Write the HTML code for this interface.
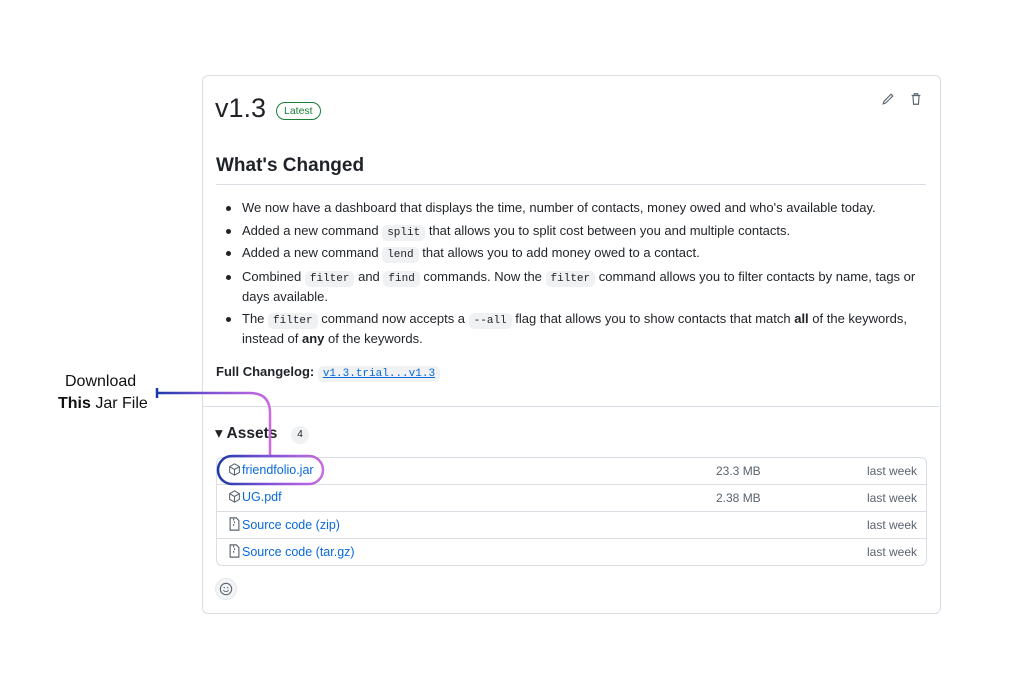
<!DOCTYPE html>
<html><head><meta charset="utf-8"><style>
body{margin:0;width:1009px;height:690px;background:#fff;font-family:"Liberation Sans","DejaVu Sans",sans-serif;color:#1f2328;position:relative;overflow:hidden}
.a{position:absolute;white-space:nowrap}
.card{position:absolute;left:202px;top:75px;width:737px;height:537px;border:1px solid #d8dee4;border-radius:6px}
.t{font-size:13px;color:#1f2328}
code{font-family:"Liberation Mono",monospace;font-size:11px;background:#eff1f3;border-radius:5px;padding:2px 5px}
.bul{position:absolute;left:226px;width:5px;height:5px;border-radius:50%;background:#1f2328}
.lnk{color:#0969da;font-size:12.5px}
.gr{color:#59636e;font-size:12px}
</style></head><body>
<div class="card"></div>
<div class="a" style="left:215px;top:93px;font-size:27px;">v1.3</div>
<div class="a" style="left:276px;top:102px;border:1px solid #1a7f37;color:#1a7f37;border-radius:10px;font-size:10.5px;padding:2px 7px;">Latest</div>
<svg class="a" style="left:881px;top:92px" width="14" height="14" viewBox="0 0 16 16"><path d="M11.5 2.5l2 2-8 8-3 1 1-3z" fill="none" stroke="#59636e" stroke-width="1.3"/></svg>
<svg class="a" style="left:909px;top:92px" width="14" height="14" viewBox="0 0 16 16"><path d="M3 4h10M6 4V2h4v2M4.5 4l.7 10h5.6l.7-10" fill="none" stroke="#59636e" stroke-width="1.3"/></svg>
<div class="a" style="left:216px;top:155px;font-size:19px;font-weight:bold;">What's Changed</div>
<div class="a" style="left:216px;top:184px;width:710px;height:1px;background:#d8dee4"></div>

<div class="bul" style="top:206px"></div><div class="a t" style="left:242px;top:200px">We now have a dashboard that displays the time, number of contacts, money owed and who's available today.</div>
<div class="bul" style="top:229px"></div><div class="a t" style="left:242px;top:223px">Added a new command <code>split</code> that allows you to split cost between you and multiple contacts.</div>
<div class="bul" style="top:251px"></div><div class="a t" style="left:242px;top:245px">Added a new command <code>lend</code> that allows you to add money owed to a contact.</div>
<div class="bul" style="top:275px"></div><div class="a t" style="left:242px;top:269px">Combined <code>filter</code> and <code>find</code> commands. Now the <code>filter</code> command allows you to filter contacts by name, tags or</div>
<div class="a t" style="left:242px;top:289px">days available.</div>
<div class="bul" style="top:317px"></div><div class="a t" style="left:242px;top:311px">The <code>filter</code> command now accepts a <code>--all</code> flag that allows you to show contacts that match <b>all</b> of the keywords,</div>
<div class="a t" style="left:242px;top:331px">instead of <b>any</b> of the keywords.</div>
<div class="a t" style="left:216px;top:364px;font-weight:bold">Full Changelog: <code style="color:#0969da;font-weight:normal;text-decoration:underline">v1.3.trial...v1.3</code></div>

<div class="a" style="left:203px;top:406px;width:736px;height:1px;background:#d8dee4"></div>
<div class="a" style="left:215px;top:424px;font-size:15.5px;font-weight:bold">▾ Assets</div>
<div class="a" style="left:291px;top:426px;width:18px;height:18px;border-radius:9px;background:#eff1f3;font-size:10px;text-align:center;line-height:18px">4</div>

<div class="a" style="left:216px;top:457px;width:709px;height:107px;border:1px solid #d8dee4;border-radius:6px"></div>
<div class="a" style="left:217px;top:484px;width:709px;height:1px;background:#d8dee4"></div>
<div class="a" style="left:217px;top:511px;width:709px;height:1px;background:#d8dee4"></div>
<div class="a" style="left:217px;top:538px;width:709px;height:1px;background:#d8dee4"></div>

<svg class="a" style="left:228px;top:463px" width="13" height="13" viewBox="0 0 16 16"><path d="M8 1l6 3.5v7L8 15l-6-3.5v-7zM2 4.5L8 8l6-3.5M8 8v7" fill="none" stroke="#59636e" stroke-width="1.3"/></svg>
<div class="a lnk" style="left:242px;top:463px">friendfolio.jar</div>
<svg class="a" style="left:228px;top:490px" width="13" height="13" viewBox="0 0 16 16"><path d="M8 1l6 3.5v7L8 15l-6-3.5v-7zM2 4.5L8 8l6-3.5M8 8v7" fill="none" stroke="#59636e" stroke-width="1.3"/></svg>
<div class="a lnk" style="left:242px;top:490px">UG.pdf</div>
<svg class="a" style="left:229px;top:517px" width="11" height="14" viewBox="0 0 12 16"><path d="M1 1h7l3 3v11H1zM5 2v2M6 5v2M5 8v2" fill="none" stroke="#59636e" stroke-width="1.3"/></svg>
<div class="a lnk" style="left:242px;top:518px">Source code (zip)</div>
<svg class="a" style="left:229px;top:544px" width="11" height="14" viewBox="0 0 12 16"><path d="M1 1h7l3 3v11H1zM5 2v2M6 5v2M5 8v2" fill="none" stroke="#59636e" stroke-width="1.3"/></svg>
<div class="a lnk" style="left:242px;top:545px">Source code (tar.gz)</div>

<div class="a gr" style="left:716px;top:464px">23.3 MB</div>
<div class="a gr" style="left:716px;top:491px">2.38 MB</div>
<div class="a gr" style="left:867px;top:464px">last week</div>
<div class="a gr" style="left:867px;top:491px">last week</div>
<div class="a gr" style="left:867px;top:518px">last week</div>
<div class="a gr" style="left:867px;top:545px">last week</div>

<div class="a" style="left:215px;top:578px;width:20px;height:20px;border-radius:50%;background:#f3f4f6;border:1px solid #e5e7ea"></div>
<svg class="a" style="left:219px;top:582px" width="14" height="14" viewBox="0 0 16 16"><circle cx="8" cy="8" r="6.5" fill="none" stroke="#59636e" stroke-width="1.2"/><circle cx="6" cy="6.5" r=".8" fill="#59636e"/><circle cx="10" cy="6.5" r=".8" fill="#59636e"/><path d="M5 9.5q3 3 6 0" fill="none" stroke="#59636e" stroke-width="1.2"/></svg>

<svg class="a" style="left:0;top:0" width="1009" height="690">
<defs><linearGradient id="g" x1="0" x2="1"><stop offset="0" stop-color="#1a3aa8"/><stop offset=".45" stop-color="#7b4fd6"/><stop offset="1" stop-color="#c86ce0"/></linearGradient></defs>
<path d="M157 393H250q20 0 20 20V455" fill="none" stroke="url(#g)" stroke-width="2.5"/>
<line x1="157" y1="388" x2="157" y2="398" stroke="#1a3aa8" stroke-width="2.5"/>
<rect x="218" y="456" width="105" height="28" rx="14" fill="none" stroke="url(#g)" stroke-width="2.5"/>
</svg>
<div class="a" style="left:65px;top:373px;font-size:16px;color:#111">Download</div>
<div class="a" style="left:58px;top:395px;font-size:16px;color:#111"><b>This</b> Jar File</div>
</body></html>
